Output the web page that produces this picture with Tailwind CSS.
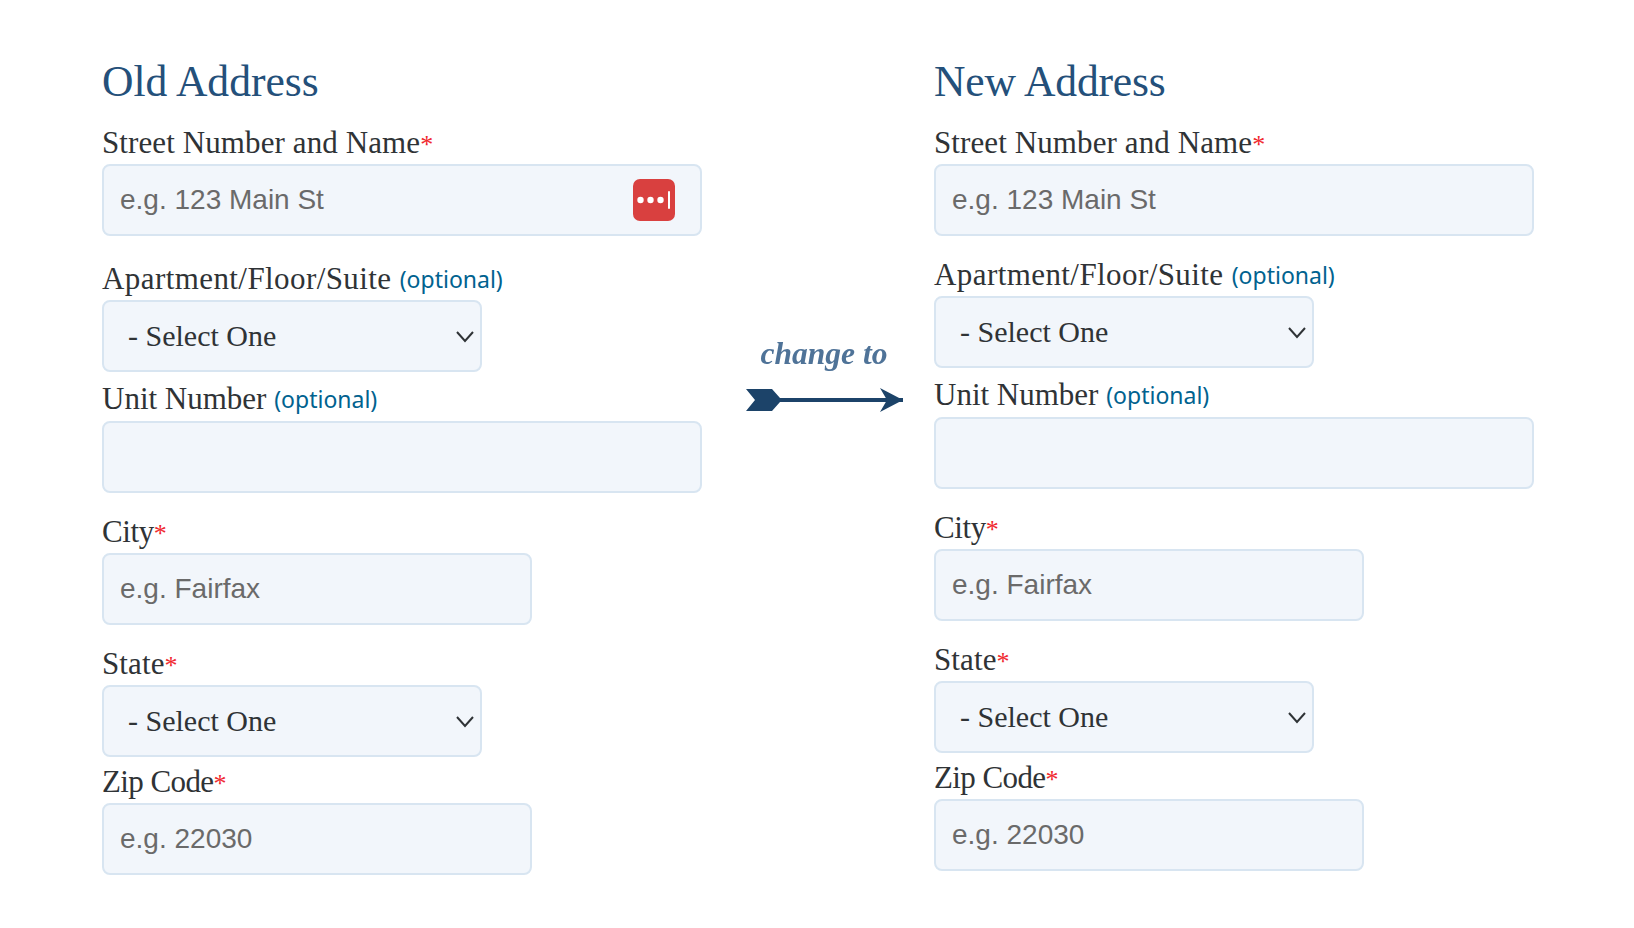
<!DOCTYPE html>
<html lang="en">
<head>
<meta charset="utf-8">
<title>Change of Address</title>
<script src="https://cdn.jsdelivr.net/npm/@tailwindcss/browser@4"></script>
</head>
<body class="bg-white">
<main class="w-[1634px] h-[928px] overflow-hidden flex pl-[102px] pt-[57px] font-['Liberation_Serif',serif] text-[#2f3336] text-[31px] tracking-[0.1px] leading-[36px]">
  <section class="w-[600px] shrink-0 flex flex-col">
    <h2 class="text-[43.6px] tracking-normal leading-[48px] text-[#24507a] mb-[20px]">Old Address</h2>
    <label for="o1" class="h-[36px] block">Street Number and Name<span class="text-[#f0272d] text-[26px]">*</span></label>
    <div class="relative mt-[3px]">
      <input id="o1" placeholder="e.g. 123 Main St" class="block w-[600px] h-[72px] px-[16px] bg-[#f2f6fb] border-2 border-[#d8e5f1] rounded-[8px] font-['Liberation_Sans',sans-serif] text-[28px] tracking-normal placeholder:text-[#6a6a6a] outline-none">
      <div class="absolute left-[531px] top-[15px] w-[42px] h-[42px] rounded-[7px] bg-[#d9403f]">
        <svg width="42" height="42" viewBox="0 0 42 42"><circle cx="7.5" cy="21" r="3.2" fill="#fff"/><circle cx="17.5" cy="21" r="3.2" fill="#fff"/><circle cx="27.5" cy="21" r="3.2" fill="#fff"/><rect x="35" y="12" width="2" height="18" rx="1" fill="#fff"/></svg>
      </div>
    </div>
    <label for="o2" class="h-[36px] block mt-[25px] tracking-[0.42px]">Apartment/Floor/Suite <span class="font-['Noto_Sans',sans-serif] text-[23px] tracking-normal text-[#00628f] align-[1px]">(optional)</span></label>
    <div class="relative w-[380px] mt-[3px]">
      <select id="o2" class="block appearance-none w-full h-[72px] pl-[24px] bg-[#f2f6fb] border-2 border-[#d8e5f1] rounded-[8px] outline-none text-[30px] tracking-normal"><option>- Select One</option></select>
      <svg class="absolute right-[7px] top-[30px]" width="20" height="14" viewBox="0 0 20 14" fill="none" stroke="#2f3336" stroke-width="2"><path d="M2 2l8 9 8-9"/></svg>
    </div>
    <label for="o3" class="h-[36px] block mt-[9px] tracking-normal">Unit Number <span class="font-['Noto_Sans',sans-serif] text-[23px] tracking-normal text-[#00628f] align-[1px]">(optional)</span></label>
    <input id="o3" class="block w-[600px] h-[72px] px-[16px] bg-[#f2f6fb] border-2 border-[#d8e5f1] rounded-[8px] outline-none mt-[4px]">
    <label for="o4" class="h-[36px] block mt-[21px] tracking-[-0.4px]">City<span class="text-[#f0272d] text-[26px]">*</span></label>
    <input id="o4" placeholder="e.g. Fairfax" class="block w-[430px] h-[72px] px-[16px] bg-[#f2f6fb] border-2 border-[#d8e5f1] rounded-[8px] font-['Liberation_Sans',sans-serif] text-[28px] tracking-normal placeholder:text-[#6a6a6a] outline-none mt-[3px]">
    <label for="o5" class="h-[36px] block mt-[21px]">State<span class="text-[#f0272d] text-[26px]">*</span></label>
    <div class="relative w-[380px] mt-[3px]">
      <select id="o5" class="block appearance-none w-full h-[72px] pl-[24px] bg-[#f2f6fb] border-2 border-[#d8e5f1] rounded-[8px] outline-none text-[30px] tracking-normal"><option>- Select One</option></select>
      <svg class="absolute right-[7px] top-[30px]" width="20" height="14" viewBox="0 0 20 14" fill="none" stroke="#2f3336" stroke-width="2"><path d="M2 2l8 9 8-9"/></svg>
    </div>
    <label for="o6" class="h-[36px] block mt-[7px] tracking-[-0.6px]">Zip Code<span class="text-[#f0272d] text-[26px]">*</span></label>
    <input id="o6" placeholder="e.g. 22030" class="block w-[430px] h-[72px] px-[16px] bg-[#f2f6fb] border-2 border-[#d8e5f1] rounded-[8px] font-['Liberation_Sans',sans-serif] text-[28px] tracking-normal placeholder:text-[#6a6a6a] outline-none mt-[3px]">
  </section>

  <div class="w-[232px] shrink-0 flex flex-col items-center pt-[277px] pl-[12px]">
    <p class="italic font-bold text-[31.5px] tracking-normal leading-[40px] text-[#4f7398] blur-[0.5px]">change to</p>
    <svg class="mt-[14px] blur-[0.4px]" width="157" height="24" viewBox="0 0 157 24" fill="#1c4369"><path d="M0 1h26l8 9h123v4H34l-8 9H0l9-11z"/><path d="M134 0l23 12-23 12 7-12z"/></svg>
  </div>

  <section class="w-[600px] shrink-0 flex flex-col">
    <h2 class="text-[43.6px] tracking-[-0.2px] leading-[48px] text-[#24507a] mb-[20px]">New Address</h2>
    <label for="n1" class="h-[36px] block">Street Number and Name<span class="text-[#f0272d] text-[26px]">*</span></label>
    <input id="n1" placeholder="e.g. 123 Main St" class="block w-[600px] h-[72px] px-[16px] bg-[#f2f6fb] border-2 border-[#d8e5f1] rounded-[8px] font-['Liberation_Sans',sans-serif] text-[28px] tracking-normal placeholder:text-[#6a6a6a] outline-none mt-[3px]">
    <label for="n2" class="h-[36px] block mt-[21px] tracking-[0.42px]">Apartment/Floor/Suite <span class="font-['Noto_Sans',sans-serif] text-[23px] tracking-normal text-[#00628f] align-[1px]">(optional)</span></label>
    <div class="relative w-[380px] mt-[3px]">
      <select id="n2" class="block appearance-none w-full h-[72px] pl-[24px] bg-[#f2f6fb] border-2 border-[#d8e5f1] rounded-[8px] outline-none text-[30px] tracking-normal"><option>- Select One</option></select>
      <svg class="absolute right-[7px] top-[30px]" width="20" height="14" viewBox="0 0 20 14" fill="none" stroke="#2f3336" stroke-width="2"><path d="M2 2l8 9 8-9"/></svg>
    </div>
    <label for="n3" class="h-[36px] block mt-[9px] tracking-normal">Unit Number <span class="font-['Noto_Sans',sans-serif] text-[23px] tracking-normal text-[#00628f] align-[1px]">(optional)</span></label>
    <input id="n3" class="block w-[600px] h-[72px] px-[16px] bg-[#f2f6fb] border-2 border-[#d8e5f1] rounded-[8px] outline-none mt-[4px]">
    <label for="n4" class="h-[36px] block mt-[21px] tracking-[-0.4px]">City<span class="text-[#f0272d] text-[26px]">*</span></label>
    <input id="n4" placeholder="e.g. Fairfax" class="block w-[430px] h-[72px] px-[16px] bg-[#f2f6fb] border-2 border-[#d8e5f1] rounded-[8px] font-['Liberation_Sans',sans-serif] text-[28px] tracking-normal placeholder:text-[#6a6a6a] outline-none mt-[3px]">
    <label for="n5" class="h-[36px] block mt-[21px]">State<span class="text-[#f0272d] text-[26px]">*</span></label>
    <div class="relative w-[380px] mt-[3px]">
      <select id="n5" class="block appearance-none w-full h-[72px] pl-[24px] bg-[#f2f6fb] border-2 border-[#d8e5f1] rounded-[8px] outline-none text-[30px] tracking-normal"><option>- Select One</option></select>
      <svg class="absolute right-[7px] top-[30px]" width="20" height="14" viewBox="0 0 20 14" fill="none" stroke="#2f3336" stroke-width="2"><path d="M2 2l8 9 8-9"/></svg>
    </div>
    <label for="n6" class="h-[36px] block mt-[7px] tracking-[-0.6px]">Zip Code<span class="text-[#f0272d] text-[26px]">*</span></label>
    <input id="n6" placeholder="e.g. 22030" class="block w-[430px] h-[72px] px-[16px] bg-[#f2f6fb] border-2 border-[#d8e5f1] rounded-[8px] font-['Liberation_Sans',sans-serif] text-[28px] tracking-normal placeholder:text-[#6a6a6a] outline-none mt-[3px]">
  </section>
</main>
</body>
</html>
